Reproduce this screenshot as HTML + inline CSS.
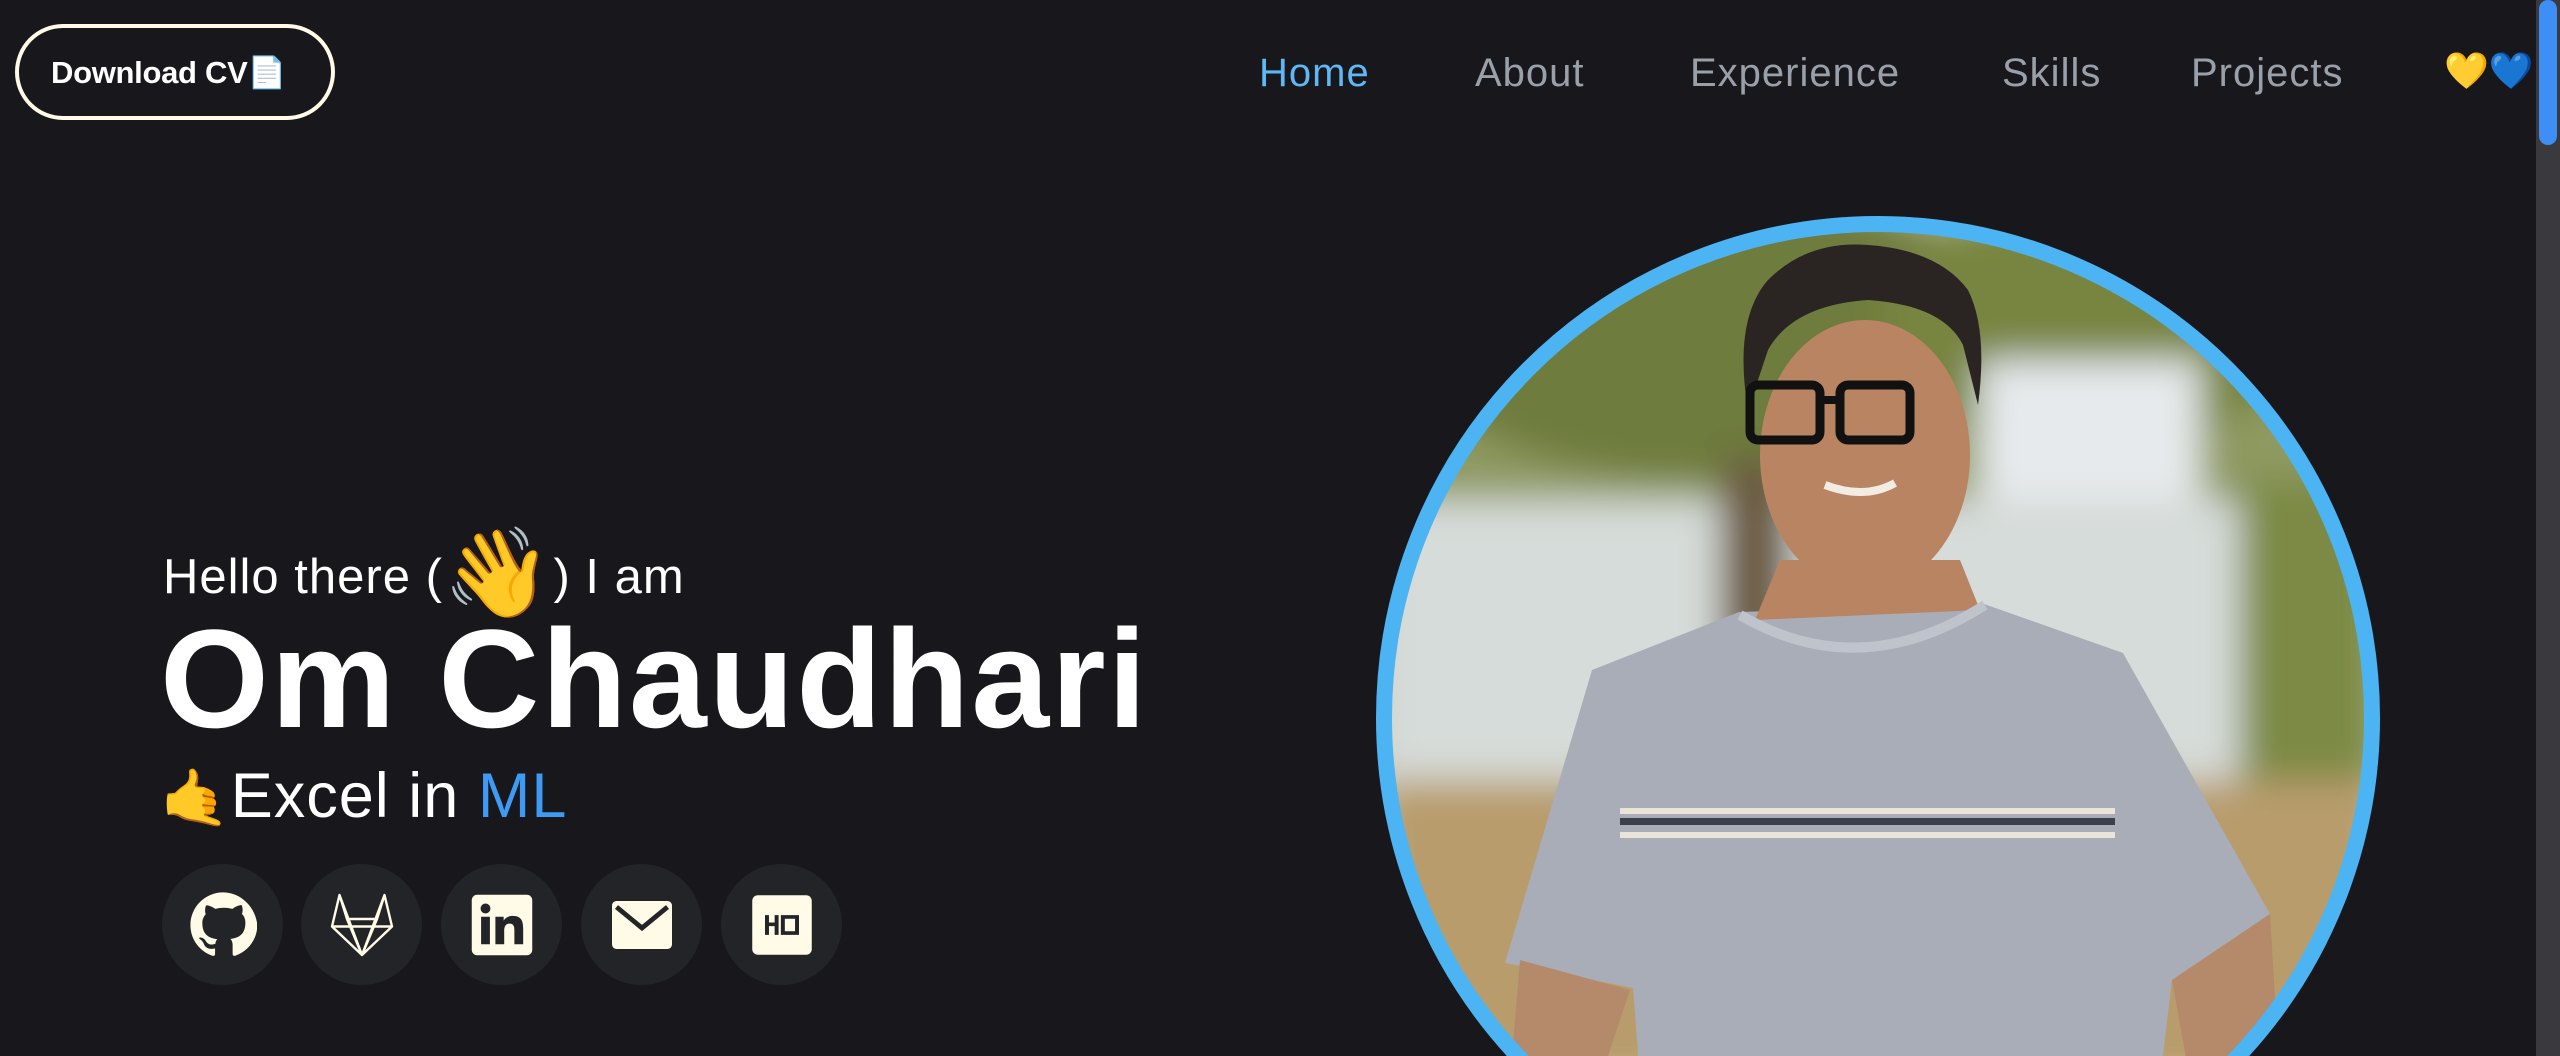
<!DOCTYPE html>
<html><head><meta charset="utf-8"><style>
*{margin:0;padding:0;box-sizing:border-box}
html,body{width:2560px;height:1056px;overflow:hidden;background:#17171c;font-family:"Liberation Sans",sans-serif;color:#fff;position:relative}
.btn{position:absolute;left:15px;top:24px;width:320px;height:96px;border:4px solid #fffbe6;border-radius:48px;font-weight:bold;font-size:31px;display:flex;align-items:center;padding-left:32px;letter-spacing:-0.3px}
.nav{position:absolute;top:51px;font-size:40px;color:#9aa0aa;letter-spacing:1px}
.sb{position:absolute;right:0;top:0;width:24px;height:1056px;background:#3a3a3e}
.sb i{position:absolute;left:3px;top:0;width:18px;height:145px;background:#3d8ef5;border-radius:9px}
.hello{position:absolute;left:163px;top:522px;font-size:49px;letter-spacing:1px;white-space:nowrap}
.name{position:absolute;left:160px;top:598px;font-size:140px;font-weight:bold;letter-spacing:2px;white-space:nowrap}
.excel{position:absolute;left:160px;top:760px;font-size:63px;letter-spacing:1px;white-space:nowrap}
.soc{position:absolute;top:864px;width:121px;height:121px;border-radius:50%;background:#232428;display:flex;align-items:center;justify-content:center}
</style></head><body>
<div class="btn">Download CV📄</div>
<div class="nav" style="left:1259px;color:#5fb8f5">Home</div>
<div class="nav" style="left:1475px">About</div>
<div class="nav" style="left:1690px">Experience</div>
<div class="nav" style="left:2002px">Skills</div>
<div class="nav" style="left:2191px">Projects</div>
<div class="nav" style="left:2444px;font-size:36px;top:50px;letter-spacing:0">💛💙</div>
<div class="sb"><i></i></div>

<div class="hello">Hello there (<span style="font-size:88px;vertical-align:-10px">👋</span>) I am</div>
<div class="name">Om Chaudhari</div>
<div class="excel"><span style="font-size:56px">🤙</span>Excel in <span style="color:#3d9bf5">ML</span></div>

<div class="soc" style="left:162px"><svg width="68" height="68" viewBox="0 0 24 24"><path fill="#fffbe6" d="M12 .5C5.7.5.5 5.7.5 12c0 5.1 3.3 9.4 7.9 10.9.6.1.8-.3.8-.6v-2c-3.2.7-3.900-1.500-3.9-1.5-.5-1.3-1.3-1.7-1.3-1.7-1-.7.1-.7.1-.7 1.2.1 1.8 1.2 1.8 1.2 1 1.8 2.7 1.3 3.4 1 .1-.8.4-1.3.7-1.6-2.6-.3-5.3-1.3-5.3-5.7 0-1.3.5-2.3 1.2-3.1-.1-.3-.5-1.5.1-3.1 0 0 1-.3 3.3 1.2a11.5 11.5 0 0 1 6 0C17.6 4.7 18.6 5 18.6 5c.6 1.6.2 2.8.1 3.1.8.8 1.2 1.8 1.2 3.1 0 4.4-2.7 5.4-5.3 5.7.4.4.8 1.1.8 2.2v3.2c0 .3.2.7.8.6 4.6-1.5 7.9-5.8 7.9-10.9C23.5 5.7 18.3.5 12 .5z"/></svg></div>
<div class="soc" style="left:301px"><svg width="72" height="72" viewBox="0 0 24 24" fill="none" stroke="#fffbe6" stroke-width="0.8" stroke-linejoin="round"><path d="M12 22 2 12.5 4.5 2 7 10h10l2.5-8L22 12.5z M2 12.5h20 M7 10l5 12 5-12 M4.5 2 12 22 19.5 2"/></svg></div>
<div class="soc" style="left:441px"><svg width="66" height="66" viewBox="0 0 24 24"><rect x="1" y="1" width="22" height="22" rx="2" fill="#fffbe6"/><circle cx="6" cy="6" r="1.8" fill="#232428"/><path fill="#232428" d="M4.4 9h3.2v10H4.4zM9.6 9h3v1.4c.5-.9 1.6-1.7 3.3-1.7 3.2 0 3.8 2 3.8 4.7V19h-3.2v-4.9c0-1.2-.1-2.6-1.700-2.600s-2 1.3-2 2.6V19H9.6z"/></svg></div>
<div class="soc" style="left:581px"><svg width="72" height="72" viewBox="0 0 24 24"><rect x="2" y="4" width="20" height="16" rx="1.5" fill="#fffbe6"/><path d="M3.5 6 12 13l8.5-7" fill="none" stroke="#232428" stroke-width="1.6"/></svg></div>
<div class="soc" style="left:721px"><svg width="68" height="68" viewBox="0 0 24 24"><rect x="1.5" y="1.5" width="21" height="21" rx="2" fill="#fffbe6"/><path fill="#232428" d="M6 8.5h1.4v2.6h2V8.5h1.4v7H9.4v-3.1h-2v3.1H6zM11.6 8.5H18v7h-6.4z"/><rect x="13" y="9.8" width="3.6" height="4.4" fill="#fffbe6"/></svg></div>

<svg style="position:absolute;left:0;top:0" width="2560" height="1056">
<defs><clipPath id="c"><circle cx="1878" cy="718" r="490"/></clipPath>
<filter id="b"><feGaussianBlur stdDeviation="18"/></filter></defs>
<g clip-path="url(#c)">
<rect x="1380" y="220" width="1000" height="840" fill="#c9ccb8"/>
<g filter="url(#b)">
<rect x="1380" y="220" width="1000" height="300" fill="#8f9a62"/>
<ellipse cx="1700" cy="330" rx="300" ry="150" fill="#6e7c3c"/>
<ellipse cx="2100" cy="320" rx="220" ry="120" fill="#78853f"/>
<rect x="1980" y="360" width="220" height="140" fill="#e6eaec"/>
<rect x="1380" y="500" width="1000" height="290" fill="#d6dcd9"/>
<rect x="1720" y="460" width="70" height="300" fill="#6a5a40"/>
<rect x="2240" y="480" width="140" height="300" fill="#7b8a44"/>
<rect x="1380" y="780" width="1000" height="300" fill="#b89c6c"/>
</g>
<path d="M1505 963 1592 670 1739 612 1984 604 2123 653 2270 914 2172 980 2160 1080 1640 1080 1633 988Z" fill="#a9adb7"/>
<path d="M1520 960 1630 990 1600 1080 1510 1080Z" fill="#b58a6a"/>
<path d="M2270 914 2172 980 2190 1080 2280 1080Z" fill="#b58a6a"/>
<path d="M1755 620 1980 610 1960 560 1780 560Z" fill="#b98462"/>
<path d="M1740 615q120 70 245-10" fill="none" stroke="#bfc3cc" stroke-width="10"/>
<rect x="1620" y="808" width="495" height="6" fill="#e8e4d8"/>
<rect x="1620" y="818" width="495" height="7" fill="#3c4048"/>
<rect x="1620" y="832" width="495" height="6" fill="#e8e4d8"/>
<ellipse cx="1865" cy="455" rx="105" ry="135" fill="#b98462"/>
<path d="M1748 410q-15-90 20-130q40-40 100-35q70 5 100 45q20 40 10 115l-15-60q-20-40-95-45-75 5-100 50z" fill="#2a2522"/>
<rect x="1750" y="385" width="70" height="55" rx="8" fill="none" stroke="#111" stroke-width="9"/>
<rect x="1840" y="385" width="70" height="55" rx="8" fill="none" stroke="#111" stroke-width="9"/>
<path d="M1820 400h20" stroke="#111" stroke-width="8"/>
<path d="M1825 485q40 15 70-2" stroke="#f2ece4" stroke-width="8" fill="none"/>
</g>
<circle cx="1878" cy="718" r="494" fill="none" stroke="#4cb4f2" stroke-width="16"/>
</svg>
</body></html>
